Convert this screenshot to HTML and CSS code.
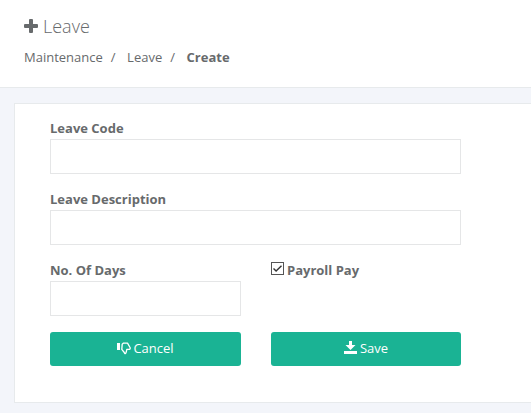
FILE: index.html
```html
<!DOCTYPE html>
<html lang="en">
<head>
<meta charset="utf-8">
<title>Leave</title>
<link rel="stylesheet" href="styles.css">
</head>
<body>
<header class="heading">
  <h2><svg class="plus" viewBox="0 0 14 14"><path d="M6 0h2q1 0 1 1v4h4q1 0 1 1v2q0 1-1 1H9v4q0 1-1 1H6q-1 0-1-1V9H1Q0 9 0 8V6q0-1 1-1h4V1q0-1 1-1z"/></svg>Leave</h2>
  <nav class="breadcrumb"><a>Maintenance</a><span class="sep">/</span><a>Leave</a><span class="sep">/</span><strong>Create</strong></nav>
</header>
<main class="wrapper">
  <form class="panel">
    <div class="field"><label for="code">Leave Code</label><input id="code" type="text"></div>
    <div class="field"><label for="desc">Leave Description</label><input id="desc" type="text"></div>
    <div class="row">
      <div class="field"><label for="days">No. Of Days</label><input id="days" type="text"></div>
      <label class="check"><svg class="box" viewBox="0 0 13 13"><rect x=".5" y=".5" width="12" height="12" fill="#fff" stroke="#555"/><path d="M2.500 6.500l2.600 2.600 5.400-5.400" fill="none" stroke="#333" stroke-width="1.400"/></svg>Payroll Pay</label>
    </div>
    <div class="row">
      <button type="button"><svg class="thumb" viewBox="0 0 14 13"><path d="M0 1h3v7H0z" fill="#fff"/><path d="M5.200 2.200L6.500 1.100H10.500L13.200 5.800Q13.400 7.300 11.800 7.400H9.800Q9.600 9.500 8.600 11.500Q7.500 12 7.300 10.500L4.800 7.400z" fill="none" stroke="#fff" stroke-width="1.300" stroke-linejoin="round"/></svg>Cancel</button>
      <button type="button"><svg class="download" viewBox="0 0 13 13"><path d="M5 0h3v4h3.500l-5 5-5-5H5zM0 10h13v3H0z" fill="#fff"/></svg>Save</button>
    </div>
  </form>
</main>
</body>
</html>
```
FILE: styles.css
```css
* { box-sizing: border-box; }
body { margin: 0; height: 413px; overflow: hidden; background: #f3f5fa; color: #676a6c; font: 13px/18px "Open Sans", sans-serif; }
.heading { height: 88px; padding: 13px 24px; background: #fff; border-bottom: 1px solid #e7eaec; }
h2 { margin: 0; font-size: 18px; font-weight: 300; line-height: 26px; display: flex; align-items: center; gap: 5px; }
.plus { width: 14px; height: 14px; fill: #676a6c; }
.breadcrumb { display: flex; margin-top: 9px; }
.sep { width: 24.300px; padding-left: 8px; }
.wrapper { padding: 15px 0 0 14px; }
.panel { height: 300px; padding: 15px 35px; background: #fff; border: 1px solid #e7eaec; border-right: 0; }
.field { width: 411px; height: 71px; }
label { display: block; font-weight: 700; }
input { display: block; width: 100%; height: 35px; margin-top: 2px; border: 1px solid #e5e6e7; background: #fff; }
.row { display: grid; grid-template-columns: 191px 190px; column-gap: 30px; }
.row .field { width: 191px; }
.check { display: flex; gap: 3px; }
.box { width: 13px; height: 13px; margin-top: 1px; }
button { display: flex; align-items: center; justify-content: center; gap: 3px; height: 34px; padding: 0 0 2px; border: 0; border-radius: 3px; background: #1ab394; color: #fff; font: 13px/18px "Open Sans", sans-serif; }
.thumb { width: 14px; height: 13px; margin-right: -1px; }
.download { width: 13px; height: 13px; margin-top: -1px; }
```
